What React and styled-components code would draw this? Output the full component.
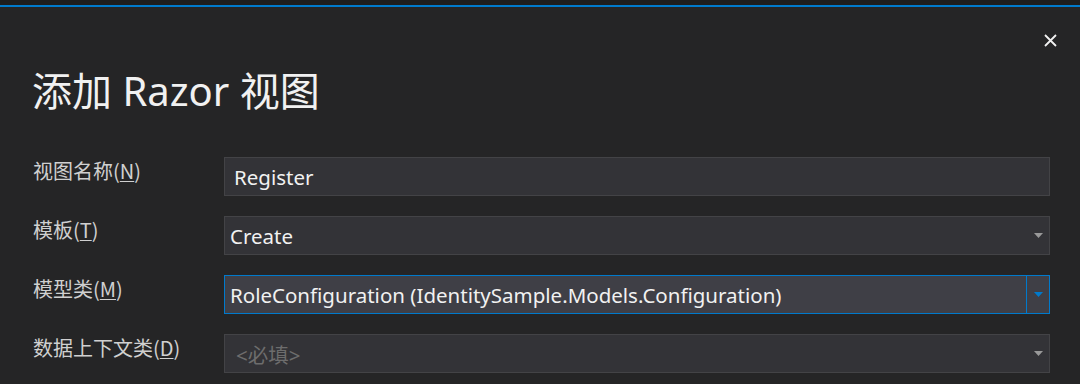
import React from "react";
import styled, { createGlobalStyle } from "styled-components";

const Global = createGlobalStyle`
  html, body { margin: 0; padding: 0; background: #252526; }
  body { font-family: "Noto Sans", "Noto Sans CJK SC", sans-serif; }
`;

const Dialog = styled.div`
  width: 1080px;
  height: 384px;
  background: #252526;
  overflow: hidden;
  display: flex;
  flex-direction: column;
`;

const TopStrip = styled.div`
  height: 5px;
  background: #1e1e1e;
`;

const AccentLine = styled.div`
  height: 2px;
  background: #007acc;
`;

const Header = styled.div`
  display: flex;
  justify-content: flex-end;
  padding: 23px 20px 0 0;
  height: 26px;
`;

const Close = styled.button`
  background: none;
  border: none;
  padding: 0;
  width: 20px;
  height: 20px;
  color: #f1f1f1;
  display: flex;
  align-items: center;
  justify-content: center;
`;

const Title = styled.h1`
  margin: 7px 0 0 32px;
  font-family: "Noto Sans", "Noto Sans CJK SC", sans-serif;
  font-weight: 400;
  font-size: 40px;
  line-height: 56px;
  color: #f1f1f1;
  white-space: nowrap;
`;

const Form = styled.div`
  display: grid;
  grid-template-columns: 191px 826px;
  row-gap: 20px;
  padding: 38px 0 0 33px;
  align-items: center;
`;

const Label = styled.label`
  font-family: "Noto Sans CJK SC", sans-serif;
  font-size: 20px;
  color: #d0d0d0;
  margin-top: -13px;
  u { text-decoration-thickness: 1px; text-underline-offset: 2px; }
`;

const Field = styled.div`
  height: 39px;
  box-sizing: border-box;
  display: flex;
  align-items: center;
  background: ${(p) => (p.$focus ? "#3f3f46" : "#333337")};
  border: 1px solid ${(p) => (p.$focus ? "#007acc" : "#434346")};
  font-family: "Noto Sans", "Noto Sans CJK SC", sans-serif;
  font-size: 20.5px;
  color: ${(p) => (p.$muted ? "#6d6d6d" : "#f1f1f1")};
`;

const Value = styled.span`
  flex: 1;
  padding-left: ${(p) => p.$pad || 5}px;
  white-space: nowrap;
`;

const Drop = styled.div`
  width: 22px;
  align-self: stretch;
  display: flex;
  align-items: center;
  justify-content: center;
  border-left: 1px solid ${(p) => (p.$focus ? "#007acc" : "transparent")};
`;

const Arrow = ({ color }) => (
  <svg width="9" height="5" viewBox="0 0 9 5">
    <path d="M0 0 H9 L4.5 5 Z" fill={color} />
  </svg>
);

export default function App() {
  return (
    <Dialog>
      <Global />
      <TopStrip />
      <AccentLine />
      <Header>
        <Close aria-label="close">
          <svg width="13" height="13" viewBox="0 0 13 13">
            <path d="M1 1 L12 12 M12 1 L1 12" stroke="#f1f1f1" strokeWidth="1.8" />
          </svg>
        </Close>
      </Header>
      <Title>添加 Razor 视图</Title>
      <Form>
        <Label>视图名称(<u>N</u>)</Label>
        <Field>
          <Value $pad={9}>Register</Value>
        </Field>
        <Label>模板(<u>T</u>)</Label>
        <Field>
          <Value>Create</Value>
          <Drop><Arrow color="#999999" /></Drop>
        </Field>
        <Label>模型类(<u>M</u>)</Label>
        <Field $focus>
          <Value>RoleConfiguration (IdentitySample.Models.Configuration)</Value>
          <Drop $focus><Arrow color="#007acc" /></Drop>
        </Field>
        <Label>数据上下文类(<u>D</u>)</Label>
        <Field $muted>
          <Value $pad={11}>&lt;必填&gt;</Value>
          <Drop><Arrow color="#999999" /></Drop>
        </Field>
      </Form>
    </Dialog>
  );
}
